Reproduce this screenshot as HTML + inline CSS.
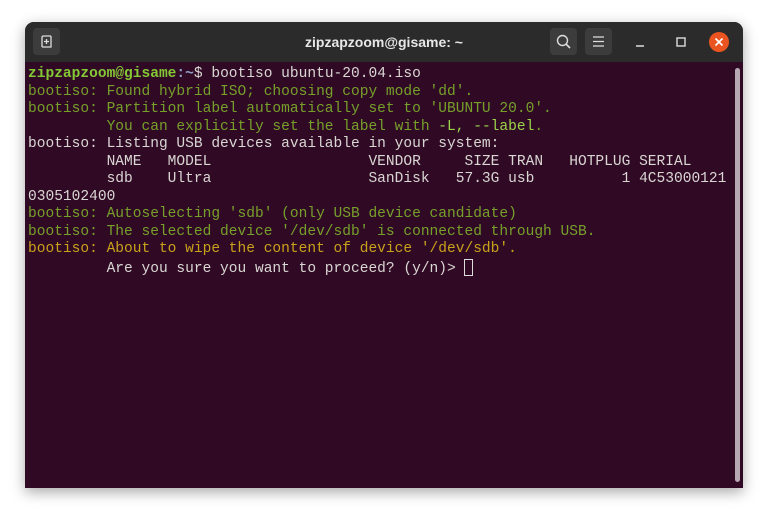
<!DOCTYPE html>
<html><head><meta charset="utf-8"><style>
html,body{margin:0;padding:0;width:768px;height:515px;background:#fff;overflow:hidden}
.win{position:absolute;left:25px;top:22px;width:718px;height:466px;border-radius:9px 9px 0 0;background:#300a24;box-shadow:0 4px 14px rgba(0,0,0,.35);overflow:hidden}
.tb{position:absolute;left:0;top:0;width:718px;height:40px;background:#2b2b2b}
.title{position:absolute;left:0;width:718px;top:0;height:40px;text-align:center;color:#e8e8e8;font-family:"Liberation Sans",sans-serif;font-weight:bold;font-size:14px;line-height:40px}
.btn{position:absolute;top:6px;width:27px;height:27px;background:#3c3c3c;border-radius:4px}
.term{position:absolute;left:3px;top:44px;font-family:"Liberation Mono",monospace;font-size:14.55px;line-height:17.55px;color:#d9d6d3;white-space:pre}
.g{color:#76a02a}.G{color:#85c836;font-weight:bold}.b{color:#8fa0c8;font-weight:bold}.y{color:#c8a21a}.l{color:#9bd34a}
.sb{position:absolute;left:710px;top:46px;width:5px;height:414px;background:#b8a8b6;border-radius:3px}
</style></head><body>
<div class="win">
<div class="tb">
<div class="btn" style="left:8px"><svg width="27" height="27"><path d="M9 19V9.5Q9 8 10.5 8H18" stroke="#ddd" fill="none" stroke-width="1.3"/><path d="M18 8V19H9" stroke="#ddd" fill="none" stroke-width="1.3"/><path d="M13.5 11v5M11 13.5h5" stroke="#ddd" stroke-width="1.3"/></svg></div>
<div class="title">zipzapzoom@gisame: ~</div>
<div class="btn" style="left:525px"><svg width="27" height="27"><circle cx="12.5" cy="12.5" r="5" stroke="#ddd" fill="none" stroke-width="1.4"/><path d="M16 16l4 4" stroke="#ddd" stroke-width="1.6"/></svg></div>
<div class="btn" style="left:560px"><svg width="27" height="27"><path d="M8 9h11M8 13.5h11M8 18h11" stroke="#ddd" stroke-width="1.3"/></svg></div>
<svg style="position:absolute;left:605px;top:10px" width="20" height="20"><path d="M6 14h8" stroke="#ddd" stroke-width="1.5"/></svg>
<svg style="position:absolute;left:646px;top:10px" width="20" height="20"><rect x="6" y="6" width="8" height="8" stroke="#ddd" fill="none" stroke-width="1.4"/></svg>
<svg style="position:absolute;left:683px;top:9px" width="22" height="22"><circle cx="11" cy="11" r="10" fill="#e95420"/><path d="M7.5 7.5l7 7M14.5 7.5l-7 7" stroke="#fff" stroke-width="1.6"/></svg>
</div>
<div class="term"><span class="G">zipzapzoom@gisame</span><span class="b">:~</span>$ bootiso ubuntu-20.04.iso
<span class="g">bootiso: Found hybrid ISO; choosing copy mode 'dd'.</span>
<span class="g">bootiso: Partition label automatically set to 'UBUNTU 20.0'.</span>
<span class="g">         You can explicitly set the label with <span class="l">-L, --label</span>.</span>
bootiso: Listing USB devices available in your system:
         NAME   MODEL                  VENDOR     SIZE TRAN   HOTPLUG SERIAL
         sdb    Ultra                  SanDisk   57.3G usb          1 4C53000121
0305102400
<span class="g">bootiso: Autoselecting 'sdb' (only USB device candidate)</span>
<span class="g">bootiso: The selected device '/dev/sdb' is connected through USB.</span>
<span class="y">bootiso: About to wipe the content of device '/dev/sdb'.</span>
         Are you sure you want to proceed? (y/n)> <span style="display:inline-block;width:9px;height:17px;border:1px solid #ddd;vertical-align:-4px;box-sizing:border-box"></span></div>
<div class="sb"></div>
</div>
</body></html>
